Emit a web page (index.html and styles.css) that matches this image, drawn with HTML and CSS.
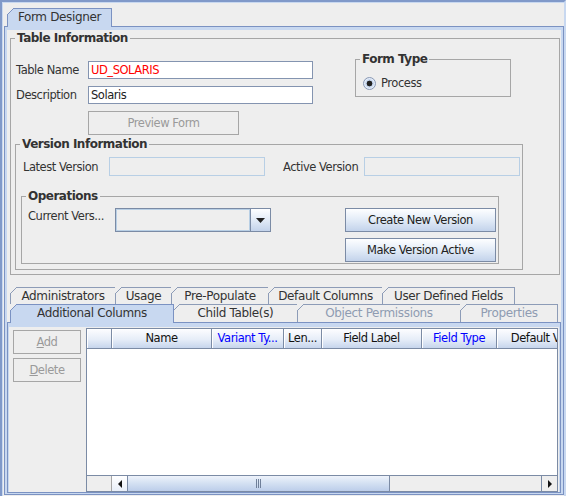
FILE: index.html
```html
<!DOCTYPE html>
<html lang="en">
  <head>
    <meta charset="UTF-8">
    <title>Form Designer</title>
    <link rel="stylesheet" href="styles.css">
  </head>
  <body>
    <div class="window">
      <div class="tab tab-sel main-tab">Form Designer</div>

      <div class="panel">
        <fieldset class="group ti">
          <legend>Table Information</legend>
          <div class="ti-top">
            <div class="ti-form">
              <label>Table Name</label>
              <input class="field red" type="text" value="UD_SOLARIS" readonly>
              <label>Description</label>
              <input class="field" type="text" value="Solaris" readonly>
              <span></span>
              <button class="btn btn-off preview">Preview Form</button>
            </div>
            <fieldset class="group formtype">
              <legend>Form Type</legend>
              <div class="radio-row"><span class="radio"></span>Process</div>
            </fieldset>
          </div>

          <fieldset class="group version">
            <legend>Version Information</legend>
            <div class="ver-row">
              <label class="lbl-latest">Latest Version</label>
              <div class="field-off"></div>
              <label class="lbl-active">Active Version</label>
              <div class="field-off"></div>
            </div>
            <fieldset class="group ops">
              <legend>Operations</legend>
              <div class="ops-body">
                <div class="ops-left">
                  <label class="lbl-current">Current Vers...</label>
                  <div class="combo">
                    <div class="combo-text"></div>
                    <div class="combo-arrow">
                      <svg width="9" height="5" viewBox="0 0 9 5"><polygon points="0,0 9,0 4.5,5" fill="#222"/></svg>
                    </div>
                  </div>
                </div>
                <div class="ops-buttons">
                  <button class="btn">Create New Version</button>
                  <button class="btn">Make Version Active</button>
                </div>
              </div>
            </fieldset>
          </fieldset>
        </fieldset>

        <div class="subtabs">
          <div class="tabrow row1">
            <div class="tab w106">Administrators</div>
            <div class="tab w57">Usage</div>
            <div class="tab w98">Pre-Populate</div>
            <div class="tab w115">Default Columns</div>
            <div class="tab w133">User Defined Fields</div>
          </div>
          <div class="tabrow row2">
            <div class="tab tab-sel w164">Additional Columns</div>
            <div class="tab w125">Child Table(s)</div>
            <div class="tab tab-off w164">Object Permissions</div>
            <div class="tab tab-off w98">Properties</div>
          </div>
        </div>

        <div class="subpanel">
          <div class="side">
            <button class="btn btn-off small"><u>A</u>dd</button>
            <button class="btn btn-off small"><u>D</u>elete</button>
          </div>
          <div class="grid">
            <div class="thead">
              <div class="th c25"></div>
              <div class="th c100">Name</div>
              <div class="th c72 blue">Variant Ty...</div>
              <div class="th c38">Len...</div>
              <div class="th c100">Field Label</div>
              <div class="th c75 blue">Field Type</div>
              <div class="th c100">Default Value</div>
            </div>
            <div class="tbody"></div>
            <div class="hscroll">
              <div class="corner"></div>
              <div class="arrow-btn">
                <svg width="4" height="8" viewBox="0 0 4 8"><polygon points="4,0 4,8 0,4" fill="#111"/></svg>
              </div>
              <div class="thumb">
                <svg width="5" height="9" viewBox="0 0 5 9">
                  <rect x="0" y="0" width="1" height="9" fill="#6f7f99"/>
                  <rect x="2" y="0" width="1" height="9" fill="#6f7f99"/>
                  <rect x="4" y="0" width="1" height="9" fill="#6f7f99"/>
                </svg>
              </div>
              <div class="track"></div>
              <div class="arrow-btn right">
                <svg width="4" height="8" viewBox="0 0 4 8"><polygon points="0,0 0,8 4,4" fill="#111"/></svg>
              </div>
            </div>
          </div>
        </div>
      </div>
    </div>
  </body>
</html>
```

FILE: styles.css
```css
* {
  box-sizing: border-box;
}

body {
  margin: 0;
  background-color: #eeeeee;
  font-family: "DejaVu Sans", sans-serif;
  font-size: 11.5px;
  letter-spacing: -0.45px;
  color: #333333;
}

.window {
  width: 566px;
  height: 496px;
  border-top: 2px solid #8099c9;
  border-left: 2px solid #8099c9;
  border-right: 2px solid #c8d8f0;
  box-shadow: inset 1px 1px 0 #c8d8f0;
  padding: 6px 0 0 2px;
}

/* tabs */
.tab {
  --line: #8d9cb7;
  position: relative;
  flex: none;
  border: 1px solid var(--line);
  border-bottom: none;
  background-color: #eeeeee;
  text-align: center;
  font-size: 12px;
  letter-spacing: -0.35px;
  color: #333333;
  white-space: nowrap;
}

.tab::before {
  content: "";
  position: absolute;
  top: -1px;
  left: -1px;
  width: 7px;
  height: 7px;
  background: linear-gradient(to bottom right, #eeeeee 0 calc(50% - 0.7px), var(--line) calc(50% - 0.7px) calc(50% + 0.7px), transparent calc(50% + 0.7px));
}

.tab-sel {
  --line: #7b92c2;
  background-color: #c8d8f0;
  z-index: 1;
}

.tab-off {
  color: #8f9cb2;
}

.main-tab {
  width: 105px;
  height: 19px;
  margin: 0 0 -1px 3px;
  line-height: 17px;
}

.panel {
  width: 560px;
  height: 469px;
  border: 1px solid #7b92c2;
  box-shadow: inset 0 3px 0 #c8d8f0, inset 2px 0 0 #c8d8f0, inset -2px 0 0 #c8d8f0, inset 0 -1px 0 #c8d8f0;
  padding: 4px 2px 1px 2px;
}

/* titled groups */
fieldset.group {
  margin: 0;
  min-width: 0;
  padding: 0 2px 4px 4px;
  border: 1px solid #a6a6a6;
}

fieldset.group legend {
  padding: 0 2px;
  font-weight: bold;
  font-size: 12px;
  line-height: 14px;
  letter-spacing: -0.5px;
  color: #333333;
}

.ti {
  height: 244px;
  margin: 0 1px 0 3px !important;
}

.ti-top {
  display: flex;
  align-items: flex-start;
  margin-top: 7px;
}

.ti-form {
  display: grid;
  grid-template-columns: 73px 225px;
  row-gap: 7px;
  align-items: center;
  margin-top: 9px;
}

.ti-form label {
  padding-left: 1px;
}

.field {
  width: 225px;
  height: 18px;
  margin: 0;
  padding: 0 2px;
  border: 1px solid #8494b0;
  background-color: #ffffff;
  font: inherit;
  letter-spacing: inherit;
  color: #222222;
  outline: none;
}

.red {
  color: #ff0000;
}

.btn {
  height: 24px;
  margin: 0;
  padding: 0;
  border: 1px solid #7b8ba5;
  background: linear-gradient(#fdfeff, #e2ebf7 50%, #c3d3eb);
  font: inherit;
  letter-spacing: inherit;
  color: #222222;
  text-align: center;
}

.btn-off {
  border-color: #a6a6a6;
  background: #eeeeee;
  color: #9a9a9a;
}

.preview {
  width: 151px;
}

.formtype {
  width: 156px;
  height: 45px;
  margin-left: 42px !important;
}

.radio-row {
  display: flex;
  align-items: center;
  gap: 5px;
  height: 14px;
  margin: 10px 0 0 3px;
}

.radio {
  width: 13px;
  height: 13px;
  border: 1px solid #8898b5;
  border-radius: 50%;
  background: radial-gradient(circle, #222222 0 2.6px, #c8d8f0 3.2px 4px, #e4ecf7 4.6px);
}

.version {
  width: 508px;
  height: 133px;
  margin-top: 2px !important;
}

.ver-row {
  display: flex;
  align-items: center;
  height: 19px;
  margin-top: 6px;
  padding-left: 3px;
}

.lbl-latest {
  width: 86px;
}

.lbl-active {
  width: 81px;
  margin-left: 18px;
}

.field-off {
  width: 156px;
  height: 19px;
  border: 1px solid #b8cfe5;
  background-color: #eeeeee;
}

.ops {
  width: 478px;
  height: 75px;
  margin: 13px 0 0 1px !important;
  padding-bottom: 1px !important;
}

.ops-body {
  display: flex;
  justify-content: space-between;
  margin-top: 5px;
  padding-left: 2px;
}

.ops-left {
  display: flex;
  align-items: flex-start;
}

.lbl-current {
  width: 87px;
  line-height: 16px;
}

.combo {
  display: flex;
  width: 156px;
  height: 24px;
  border: 1px solid #7b8ba5;
}

.combo-text {
  flex: 1;
  background-color: #eeeeee;
  border-right: 1px solid #7b8ba5;
  box-shadow: inset 0 0 0 1px #b8cfe5;
}

.combo-arrow {
  width: 19px;
  display: flex;
  align-items: center;
  justify-content: center;
  background: linear-gradient(#fdfeff, #e2ebf7 50%, #c3d3eb);
}

.ops-buttons {
  display: flex;
  flex-direction: column;
  gap: 6px;
}

.ops-buttons .btn {
  width: 151px;
}

/* lower tab strip */
.subtabs {
  margin: 12px 0 0 3px;
}

.tabrow {
  display: flex;
}

.tabrow .tab + .tab {
  margin-left: -1px;
}

.row1 {
  height: 17px;
}

.row1 .tab {
  height: 17px;
  line-height: 16px;
}

.row2 {
  height: 18px;
}

.row2 .tab {
  height: 18px;
  line-height: 17px;
}

.row2 .tab-sel {
  height: 19px;
}

.w57 { width: 57px; }
.w98 { width: 98px; }
.w106 { width: 106px; }
.w115 { width: 115px; }
.w125 { width: 125px; }
.w133 { width: 133px; }
.w164 { width: 164px; }

.subpanel {
  display: flex;
  width: 554px;
  height: 171px;
  border: 1px solid #7b92c2;
  box-shadow: inset 0 4px 0 #c8d8f0, inset 1px 0 0 #c8d8f0, inset -1px 0 0 #c8d8f0;
  padding: 5px 2px 0 5px;
}

.side {
  display: flex;
  flex-direction: column;
  gap: 4px;
  width: 68px;
  padding-top: 2px;
}

.small {
  width: 68px;
}

/* table */
.grid {
  flex: 1;
  min-width: 0;
  display: flex;
  flex-direction: column;
  margin-left: 5px;
  border: 1px solid #7b8ba5;
  background-color: #ffffff;
  overflow: hidden;
}

.thead {
  display: flex;
  height: 20px;
  border-bottom: 1px solid #7b8ba5;
  overflow: hidden;
}

.th {
  flex: none;
  border-right: 1px solid #7b8ba5;
  background: linear-gradient(#fdfdff, #e6edf8 55%, #c6d5ec);
  box-shadow: inset 1px 1px 0 #ffffff;
  line-height: 19px;
  text-align: center;
  color: #111111;
  white-space: nowrap;
  overflow: hidden;
}

.th.blue {
  color: #0000ff;
}

.c25 { width: 25px; }
.c38 { width: 38px; }
.c72 { width: 72px; }
.c75 { width: 75px; }
.c100 { width: 100px; }

.tbody {
  flex: 1;
}

.hscroll {
  display: flex;
  height: 16px;
  border-top: 1px solid #7b8ba5;
}

.corner {
  width: 25px;
  border-right: 1px solid #a6a6a6;
  background-color: #eeeeee;
}

.arrow-btn {
  width: 16px;
  flex: none;
  display: flex;
  align-items: center;
  justify-content: center;
  border-right: 1px solid #7b8ba5;
  background: linear-gradient(#ffffff, #e8eef8);
}

.arrow-btn.right {
  border-right: none;
  border-left: 1px solid #7b8ba5;
  background: #eeeeee;
}

.thumb {
  width: 262px;
  flex: none;
  display: flex;
  align-items: center;
  justify-content: center;
  border-right: 1px solid #7b8ba5;
  background: linear-gradient(#eef3fb, #d3e0f2 50%, #bccdea);
}

.track {
  flex: 1;
  background-color: #eeeeee;
}
```
